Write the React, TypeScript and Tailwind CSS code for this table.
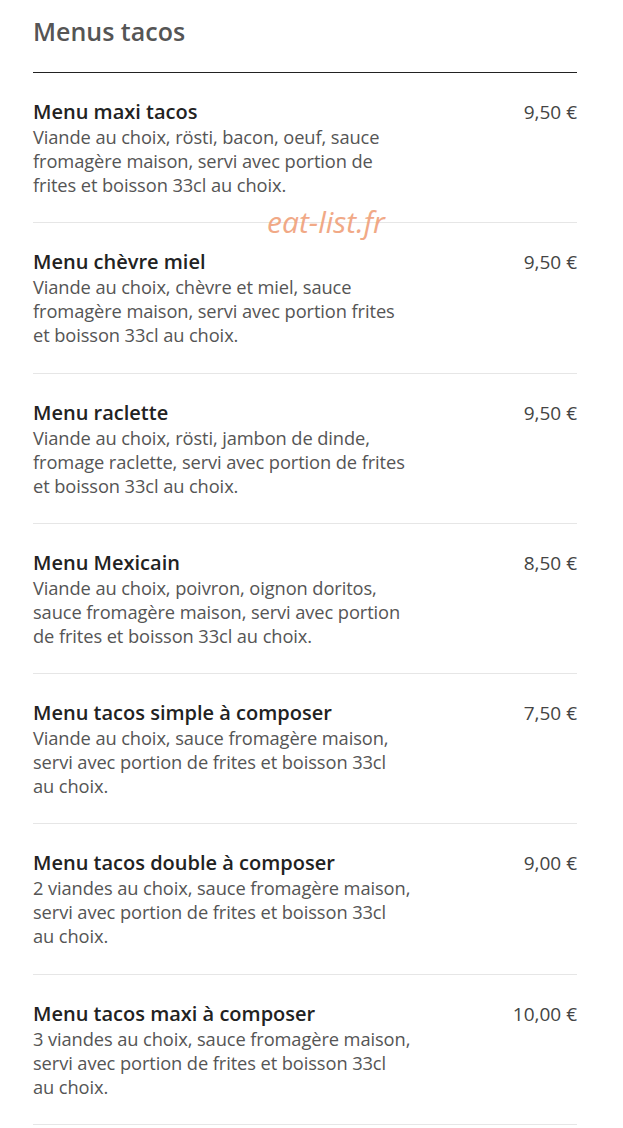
import React from "react";

type MenuItem = {
  name: string;
  lines: string[];
  price: string;
};

const items: MenuItem[] = [
  {
    name: "Menu maxi tacos",
    lines: [
      "Viande au choix, rösti, bacon, oeuf, sauce",
      "fromagère maison, servi avec portion de",
      "frites et boisson 33cl au choix.",
    ],
    price: "9,50 €",
  },
  {
    name: "Menu chèvre miel",
    lines: [
      "Viande au choix, chèvre et miel, sauce",
      "fromagère maison, servi avec portion frites",
      "et boisson 33cl au choix.",
    ],
    price: "9,50 €",
  },
  {
    name: "Menu raclette",
    lines: [
      "Viande au choix, rösti, jambon de dinde,",
      "fromage raclette, servi avec portion de frites",
      "et boisson 33cl au choix.",
    ],
    price: "9,50 €",
  },
  {
    name: "Menu Mexicain",
    lines: [
      "Viande au choix, poivron, oignon doritos,",
      "sauce fromagère maison, servi avec portion",
      "de frites et boisson 33cl au choix.",
    ],
    price: "8,50 €",
  },
  {
    name: "Menu tacos simple à composer",
    lines: [
      "Viande au choix, sauce fromagère maison,",
      "servi avec portion de frites et boisson 33cl",
      "au choix.",
    ],
    price: "7,50 €",
  },
  {
    name: "Menu tacos double à composer",
    lines: [
      "2 viandes au choix, sauce fromagère maison,",
      "servi avec portion de frites et boisson 33cl",
      "au choix.",
    ],
    price: "9,00 €",
  },
  {
    name: "Menu tacos maxi à composer",
    lines: [
      "3 viandes au choix, sauce fromagère maison,",
      "servi avec portion de frites et boisson 33cl",
      "au choix.",
    ],
    price: "10,00 €",
  },
];

const App: React.FC = () => {
  return (
    <div
      className="relative min-h-screen bg-white px-[33px] pt-[15px]"
      style={{ fontFamily: '"Open Sans", "Noto Sans", sans-serif' }}
    >
      <h1 className="text-[25px] leading-[32px] font-semibold text-[#555]">Menus tacos</h1>

      <div className="mt-[25px] w-[544px] border-t border-[#222]">
        {items.map((item) => (
          <div
            key={item.name}
            className="flex justify-between border-b border-[#e6e6e6] pt-[26px] pb-[25.3px]"
          >
            <div>
              <h3 className="text-[20px] leading-[26px] font-semibold text-[#222]">{item.name}</h3>
              <p className="text-[18.3px] leading-[24px] tracking-[-0.1px] text-[#555]">
                {item.lines.map((line, i) => (
                  <React.Fragment key={i}>
                    {line}
                    {i < item.lines.length - 1 && <br />}
                  </React.Fragment>
                ))}
              </p>
            </div>
            <span className="text-[19px] leading-[26px] font-medium text-[#444]">{item.price}</span>
          </div>
        ))}
      </div>

      {/* watermark */}
      <span className="absolute left-[267px] top-[199px] text-[30px] italic text-[#f0a07a] opacity-90">
        eat-list.fr
      </span>
    </div>
  );
};

export default App;
